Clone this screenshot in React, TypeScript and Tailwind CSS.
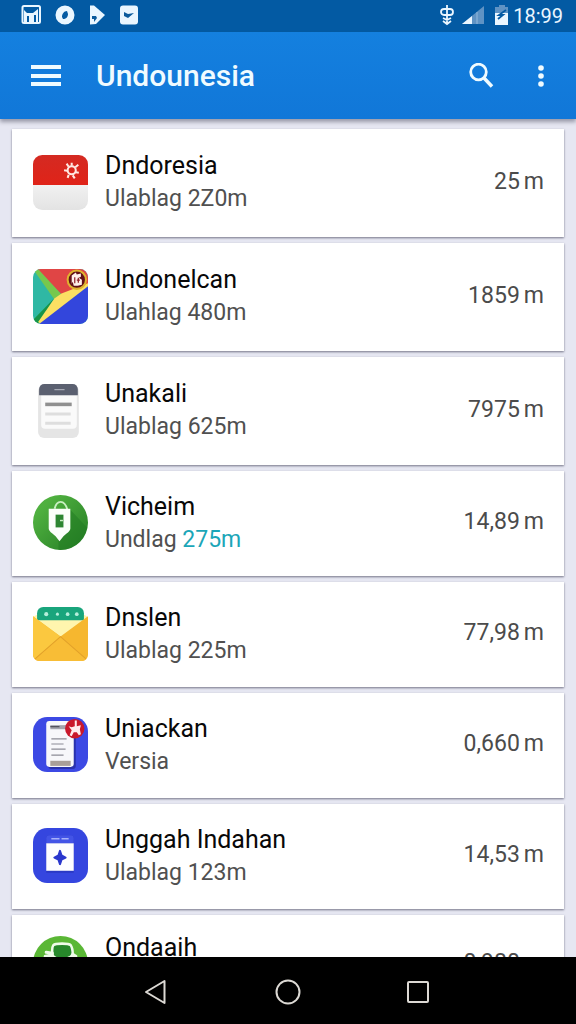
import type { ReactNode } from "react";
import clsx from "clsx";

type Item = {
  name: string;
  label?: string;
  size?: string;
  accent?: boolean;
  amount: string;
  icon: ReactNode;
  height: string;
};

const FlagIcon = () => (
  <svg viewBox="0 0 54 54" className="size-full">
    <defs>
      <linearGradient id="flag-red" x1="0" y1="0" x2="0" y2="1">
        <stop offset="0" stopColor="#d42a22" />
        <stop offset="1" stopColor="#e02318" />
      </linearGradient>
      <linearGradient id="flag-white" x1="0" y1="0" x2="0" y2="1">
        <stop offset="0" stopColor="#f1f1f1" />
        <stop offset="1" stopColor="#e3e3e3" />
      </linearGradient>
    </defs>
    <path d="M0 30V9a9 9 0 0 1 9-9h36a9 9 0 0 1 9 9v21z" fill="url(#flag-red)" />
    <path d="M0 29.500h54V45a9 9 0 0 1-9 9H9a9 9 0 0 1-9-9z" fill="url(#flag-white)" />
    <path
      d="M38 10.500v-3M41.500 12l3-2.500M42 17l3 .5M39 20l2 3M35 19.500l-1 3M33.500 15.500l-3-.5M35 11.500l-2-3"
      stroke="#ffe9e2"
      strokeWidth="2"
    />
    <circle cx="38" cy="15" r="4" fill="none" stroke="#ffe9e2" strokeWidth="2" />
  </svg>
);

const MapIcon = () => (
  <svg viewBox="0 0 54 54" className="size-full">
    <defs>
      <clipPath id="map-clip">
        <rect width="54" height="54" rx="8" />
      </clipPath>
    </defs>
    <g clipPath="url(#map-clip)">
      <rect width="54" height="54" fill="#2fb8a4" />
      <path d="M4 0h50v16L28 25z" fill="#e04545" />
      <path d="M0 0h5l23 25-7 5z" fill="#76c84d" />
      <path d="M21 28.500L5 54H0v-4z" fill="#179447" />
      <path d="M21 29l7-5 26-10v6L8 54l-3-2z" fill="#fbe063" />
      <path d="M54 17v37H6z" fill="#3346dc" />
    </g>
    <circle cx="43" cy="10.500" r="9" fill="#611017" stroke="#dfb32e" strokeWidth="2" />
    <path d="M38 6.500l4-3 1 2 4-1v3l-2 1 3 2v5l-4 1h-4l-1-4-1 2z" fill="#fff0eb" />
    <path d="M41 8v6M44.500 8.500v5M43 11h3" stroke="#8e2028" strokeWidth="1.200" />
  </svg>
);

const NotepadIcon = () => (
  <svg viewBox="0 0 54 54" className="size-full">
    <rect x="5" y="2" width="40" height="52" rx="6" fill="#e5e5e5" />
    <path d="M8 12h35v29a4 4 0 0 1-4 4H12a4 4 0 0 1-4-4z" fill="#fafafa" />
    <path d="M6 12V6a5 5 0 0 1 5-5h28a5 5 0 0 1 5 5v6z" fill="#5b6070" />
    <path d="M21 6.500h10" stroke="#a8abb6" strokeWidth="1.200" />
    <path d="M12 21h26" stroke="#909090" strokeWidth="3.500" />
    <path d="M12 30.500h25M12 39.500h25" stroke="#dedede" strokeWidth="3" />
  </svg>
);

const TagIcon = () => (
  <svg viewBox="0 0 56 56" className="size-full">
    <defs>
      <linearGradient id="tag-green" x1="0" y1="0" x2="1" y2="1">
        <stop offset="0.200" stopColor="#4fb03f" />
        <stop offset="1" stopColor="#237b23" />
      </linearGradient>
    </defs>
    <circle cx="28" cy="28" r="28" fill="url(#tag-green)" />
    <path d="M38 15l17 18A28 28 0 0 1 26 56V44l12-9z" fill="#1f7a22" opacity="0.500" />
    <path d="M22 14c2-9 10-10 13 1" fill="none" stroke="#c9efc2" strokeWidth="2" />
    <path d="M16 14h22v20c0 3-4 5-7 8l-4 5-4-5c-3-3-7-5-7-8z" fill="#fbfffa" />
    <path d="M23 20h8v13h-8z" fill="#2c8630" />
    <path d="M27.500 26h3" stroke="#c9efc2" strokeWidth="1.500" />
  </svg>
);

const EnvelopeIcon = () => (
  <svg viewBox="0 0 54 54" className="size-full">
    <path d="M1 10l4-2h44l4 2v20H1z" fill="#fff5ae" />
    <path d="M4 14V7a6 6 0 0 1 6-6h34a6 6 0 0 1 6 6v7z" fill="#19a57c" />
    <g fill="#b5eedb">
      <circle cx="13" cy="8" r="2" />
      <circle cx="24" cy="8" r="1.500" />
      <circle cx="34" cy="8" r="1.800" />
      <circle cx="43" cy="8" r="1.800" />
    </g>
    <path d="M0 10l27 20L54 10v38a6 6 0 0 1-6 6H6a6 6 0 0 1-6-6z" fill="#f6b72f" />
    <path d="M0 10l27 20L2 52a6 6 0 0 1-2-4z" fill="#fbc83f" />
    <path d="M2 52l25-22 25 22a6 6 0 0 1-4 2H6a6 6 0 0 1-4-2z" fill="#f8bd36" />
    <path d="M2 52l25-22 25 22" fill="none" stroke="#e2a12a" strokeWidth="1" />
  </svg>
);

const ReportIcon = () => (
  <svg viewBox="0 0 54 54" className="size-full">
    <rect width="54" height="54" rx="14" fill="#3c49e4" />
    <rect x="15" y="6" width="27" height="45" rx="3" fill="#2932ad" />
    <rect x="13" y="4" width="27" height="45" rx="3" fill="#f7f7fa" />
    <path d="M17 8h18v4H17z" fill="#a3a3ac" />
    <path d="M17 9.500h9" stroke="#4e4e58" strokeWidth="1.200" />
    <path d="M18 21.500h15M18 26.500h12M18 31.500h14M18 37.500h12" stroke="#8c8c95" strokeWidth="1.200" />
    <path d="M17 43h20v5H17z" fill="#a99f99" />
    <circle cx="41" cy="11.500" r="9.500" fill="#c9182b" />
    <path d="M41 3.500h2V9l4-1-1 4 1 5-2 1-2-3h-3l-2 4-2-1 2-5-3-4 3 1 3-1z" fill="#ffecee" />
  </svg>
);

const CalendarIcon = () => (
  <svg viewBox="0 0 54 54" className="size-full">
    <rect width="54" height="54" rx="14" fill="#3546df" />
    <path d="M13 10a3 3 0 0 1 3-3h21a3 3 0 0 1 3 3v34H13z" fill="#2a39c4" />
    <path d="M13 10a3 3 0 0 1 3-3h21a3 3 0 0 1 3 3v5H13z" fill="#4354e6" />
    <path d="M18 10.500h8M28 10.500h7" stroke="#a9b2fa" strokeWidth="1.500" />
    <path d="M13 15h27v27H13z" fill="#fdfdff" />
    <path
      d="M26.500 22.500l1.500 4.500 4 2-4 2-1.500 4.500L25 31l-4-2 4-2z"
      fill="#2936cd"
      stroke="#2936cd"
      strokeWidth="2"
      strokeLinejoin="round"
    />
  </svg>
);

const TreeIcon = () => (
  <svg viewBox="0 0 54 54" className="size-full">
    <circle cx="27" cy="27" r="27" fill="#5ab735" />
    <path
      d="M20 9c2-2 15-2 17 0 2 3 2 6 2 9-3 6-19 6-20 0 0-3-1-6 1-9z"
      fill="#27882b"
      stroke="#effbe9"
      strokeWidth="2.500"
      strokeLinejoin="round"
    />
    <path
      d="M19 17l-6-1M18 19l-4 5M12 20l6-1M39 18l3 2M39 20l2 4"
      fill="none"
      stroke="#effbe9"
      strokeWidth="3"
      strokeLinecap="round"
    />
  </svg>
);

const items: Item[] = [
  { name: "Dndoresia", label: "Ulablag", size: "2Z0m", amount: "25", icon: <FlagIcon />, height: "h-[108px]" },
  { name: "Undonelcan", label: "Ulahlag", size: "480m", amount: "1859", icon: <MapIcon />, height: "h-[108px]" },
  { name: "Unakali", label: "Ulablag", size: "625m", amount: "7975", icon: <NotepadIcon />, height: "h-[108px]" },
  { name: "Vicheim", label: "Undlag", size: "275m", accent: true, amount: "14,89", icon: <TagIcon />, height: "h-[105px]" },
  { name: "Dnslen", label: "Ulablag", size: "225m", amount: "77,98", icon: <EnvelopeIcon />, height: "h-[105px]" },
  { name: "Uniackan", label: "Versia", amount: "0,660", icon: <ReportIcon />, height: "h-[105px]" },
  { name: "Unggah Indahan", label: "Ulablag", size: "123m", amount: "14,53", icon: <CalendarIcon />, height: "h-[105px]" },
  { name: "Ondaaih", amount: "0,980", icon: <TreeIcon />, height: "h-[99px]" },
];

function StatusBar() {
  return (
    <div className="flex h-8 shrink-0 items-center bg-[#035aa3] pr-[13px] pl-5 text-[#eaf6ff]">
      <div className="flex items-center gap-3">
        <svg viewBox="0 0 22 22" className="size-[22px]">
          <rect x="2.500" y="1" width="17.500" height="17" rx="1.500" fill="none" stroke="currentColor" strokeWidth="2" />
          <path d="M4 17V5l3 3h6l5-4v13h-2v-7h-2v7H9v-6H7v6z" fill="currentColor" />
        </svg>
        <svg viewBox="0 0 22 22" className="size-[22px]">
          <path
            fillRule="evenodd"
            d="M11 .5a9.500 9.500 0 1 1 0 19 9.500 9.500 0 0 1 0-19zM13 6c-3 0-5 3-5 6l1 2c3 0 5-2 5-5z"
            fill="currentColor"
          />
        </svg>
        <svg viewBox="0 0 22 22" className="size-[22px]">
          <path d="M2 .5h4L17 10 8 19l-6 .5z" fill="currentColor" />
          <path d="M4 11h4l1 2-3 4v-3H4z" fill="#0b5a9c" />
        </svg>
        <svg viewBox="0 0 22 22" className="-ml-1 size-[22px]">
          <rect x="2" y=".5" width="18" height="19" rx="3" fill="currentColor" />
          <path d="M6 7l4 2 6-1-6 5-4-2z" fill="#0b5a9c" />
        </svg>
      </div>
      <div className="ml-auto flex items-center">
        <svg viewBox="0 0 16 22" className="h-[22px] w-4" fill="none" stroke="currentColor" strokeWidth="1.800">
          <path d="M8 0v19M5 4h6a2.500 2.500 0 0 1 0 6H5a2.500 2.500 0 0 1 0-6zM4 13l4 2 4-2M4 16l4 3 4-3" />
        </svg>
        <svg viewBox="0 0 22 22" className="ml-[7px] size-[22px]">
          <path d="M22 1v18H0z" fill="#5f93c4" />
          <path d="M10 11v8H0z" fill="currentColor" />
          <path d="M15 7v12" stroke="#94b9dc" />
        </svg>
        <svg viewBox="0 0 16 22" className="ml-[10px] h-[22px] w-4">
          <path d="M1 2h4V0h6v2h3v17H1z" fill="#5f93c4" />
          <path d="M1 8h13v12H1z" fill="currentColor" />
          <path d="M12 5l-7 5h4l-5 4" stroke="#035aa3" strokeWidth="1.800" fill="none" />
        </svg>
        <span className="ml-[3px] text-xl leading-8">18:99</span>
      </div>
    </div>
  );
}

function AppBar() {
  return (
    <header className="relative flex h-[87px] shrink-0 items-center bg-linear-to-b from-[#1480df] to-[#1177d8] pr-5 pl-[31px] text-[#f0fbff] shadow-[0_3px_4px_rgba(60,60,80,0.45)]">
      <button type="button" aria-label="Menu" className="flex h-[21px] w-[30px] flex-col justify-between">
        <span className="h-1 w-full bg-current" />
        <span className="h-1 w-full bg-current" />
        <span className="h-1 w-full bg-current" />
      </button>
      <h1 className="ml-[35px] text-[30px] leading-9 font-medium">Undounesia</h1>
      <button type="button" aria-label="Search" className="ml-auto">
        <svg viewBox="0 0 26 26" className="size-[26px]" fill="none" stroke="currentColor">
          <circle cx="10.500" cy="9" r="7.800" strokeWidth="2.800" />
          <path d="M15.500 14.500l8.500 9" strokeWidth="3.500" />
        </svg>
      </button>
      <button type="button" aria-label="More options" className="ml-8">
        <svg viewBox="0 0 30 24" className="h-6 w-[30px]" fill="currentColor">
          <circle cx="15" cy="4" r="2.800" />
          <circle cx="15" cy="12" r="2.800" />
          <circle cx="15" cy="20" r="2.800" />
        </svg>
      </button>
    </header>
  );
}

function ItemCard({ item }: { item: Item }) {
  return (
    <li
      className={clsx(
        "flex shrink-0 items-center bg-white pr-5 pb-[2px] pl-[21px] shadow-[0_1px_2px_rgba(70,70,90,0.7)]",
        item.height,
      )}
    >
      <div className="size-[55px] shrink-0">{item.icon}</div>
      <div className="ml-[17px]">
        <h2 className="text-[25px] leading-[33px] text-[#080808]">{item.name}</h2>
        <p className="min-h-[33px] text-[23px] leading-[33px] text-[#505050]">
          {item.label}
          {item.size && <span className={clsx(item.accent && "text-[#1ba6b8]")}> {item.size}</span>}
        </p>
      </div>
      <p className="ml-auto text-[23px] text-[#4b4b4b]">
        {item.amount}
        <span className="ml-1">m</span>
      </p>
    </li>
  );
}

function NavBar() {
  return (
    <nav className="flex h-[67px] shrink-0 items-center justify-center gap-[102px] bg-black pt-[2px] text-[#dcd9d4]">
      <button type="button" aria-label="Back">
        <svg viewBox="0 0 28 28" className="size-7" fill="none" stroke="currentColor" strokeWidth="2">
          <path d="M20.500 3v22L2 14z" strokeLinejoin="round" />
        </svg>
      </button>
      <button type="button" aria-label="Home">
        <svg viewBox="0 0 28 28" className="size-7" fill="none" stroke="currentColor" strokeWidth="2">
          <circle cx="14" cy="14" r="11.500" />
        </svg>
      </button>
      <button type="button" aria-label="Recent apps">
        <svg viewBox="0 0 28 28" className="size-7" fill="none" stroke="currentColor" strokeWidth="2">
          <rect x="4" y="4" width="20" height="20" rx="1" />
        </svg>
      </button>
    </nav>
  );
}

export default function App() {
  return (
    <div className="flex h-screen flex-col overflow-hidden bg-[#e6e7f2] font-['Roboto',sans-serif]">
      <StatusBar />
      <AppBar />
      <main className="min-h-0 flex-1 overflow-hidden">
        <ul className="flex flex-col gap-[6px] px-3 pt-[10px]">
          {items.map((item) => (
            <ItemCard key={item.name} item={item} />
          ))}
        </ul>
      </main>
      <NavBar />
    </div>
  );
}
